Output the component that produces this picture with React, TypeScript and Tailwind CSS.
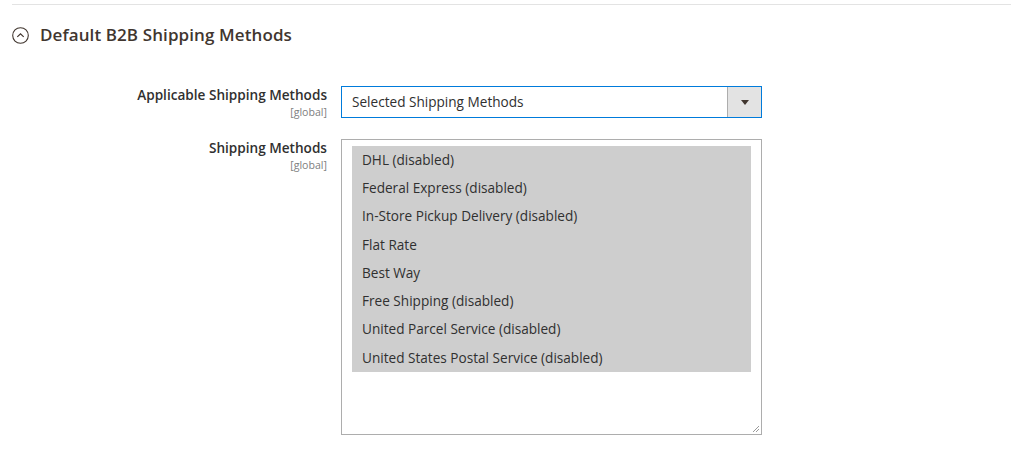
import React from "react";

const options = [
  "DHL (disabled)",
  "Federal Express (disabled)",
  "In-Store Pickup Delivery (disabled)",
  "Flat Rate",
  "Best Way",
  "Free Shipping (disabled)",
  "United Parcel Service (disabled)",
  "United States Postal Service (disabled)",
];

export default function App() {
  return (
    <div
      className="w-[1024px] h-[460px] bg-white text-[#303030] overflow-hidden"
      style={{ fontFamily: '"Open Sans", "Noto Sans", sans-serif' }}
    >
      <div className="ml-[12px] mr-[13px] pt-[4px]">
        <div className="border-t border-[#e3e3e3]" />
        <div className="flex items-center h-[60px]">
          <svg width="17" height="17" viewBox="0 0 17 17" className="shrink-0">
            <circle cx="8.5" cy="8.5" r="7.8" fill="none" stroke="#41362f" strokeWidth="1.1" />
            <path d="M5.3 9.9 L8.5 6.8 L11.7 9.9" fill="none" stroke="#41362f" strokeWidth="1.2" />
          </svg>
          <span className="ml-[11px] text-[17px] font-semibold tracking-[0.1px] text-[#41362f]">
            Default B2B Shipping Methods
          </span>
        </div>

        <div className="flex items-start h-[32px] mt-[21px]">
          <div className="w-[315px] text-right">
            <div className="text-[13.6px] leading-[18.5px] font-semibold text-[#303030]">Applicable Shipping Methods</div>
            <div className="text-[10.6px] leading-[14.5px] text-[#808080]">[global]</div>
          </div>
          <div className="ml-[14px] w-[421px] h-[32px] border border-[#007bdb] flex">
            <div className="flex-1 flex items-center pl-[10px] text-[13.6px] text-[#303030]">
              Selected Shipping Methods
            </div>
            <div className="w-[34px] bg-[#e3e3e3] border-l border-[#adadad] flex items-center justify-center">
              <svg width="8" height="5" viewBox="0 0 8 5">
                <path d="M0 0 H8 L4 5 Z" fill="#41362f" />
              </svg>
            </div>
          </div>
        </div>

        <div className="flex items-start mt-[21px]">
          <div className="w-[315px] text-right">
            <div className="text-[13.6px] leading-[18.5px] font-semibold text-[#303030]">Shipping Methods</div>
            <div className="text-[10.6px] leading-[14.5px] text-[#808080]">[global]</div>
          </div>
          <div className="relative ml-[14px] w-[421px] h-[296px] border border-[#adadad] pt-[6px] pl-[10px] pr-[10px]">
            <div className="bg-[#cecece]">
              {options.map((o) => (
                <div key={o} className="h-[28.25px] flex items-center pl-[10px] text-[13.6px] text-[#303030]">
                  {o}
                </div>
              ))}
            </div>
            <svg className="absolute right-[1px] bottom-[1px]" width="9" height="9" viewBox="0 0 9 9">
              <path d="M8 2 L2 8 M8 5 L5 8" stroke="#9a9a9a" strokeWidth="1" />
            </svg>
          </div>
        </div>
      </div>
    </div>
  );
}
